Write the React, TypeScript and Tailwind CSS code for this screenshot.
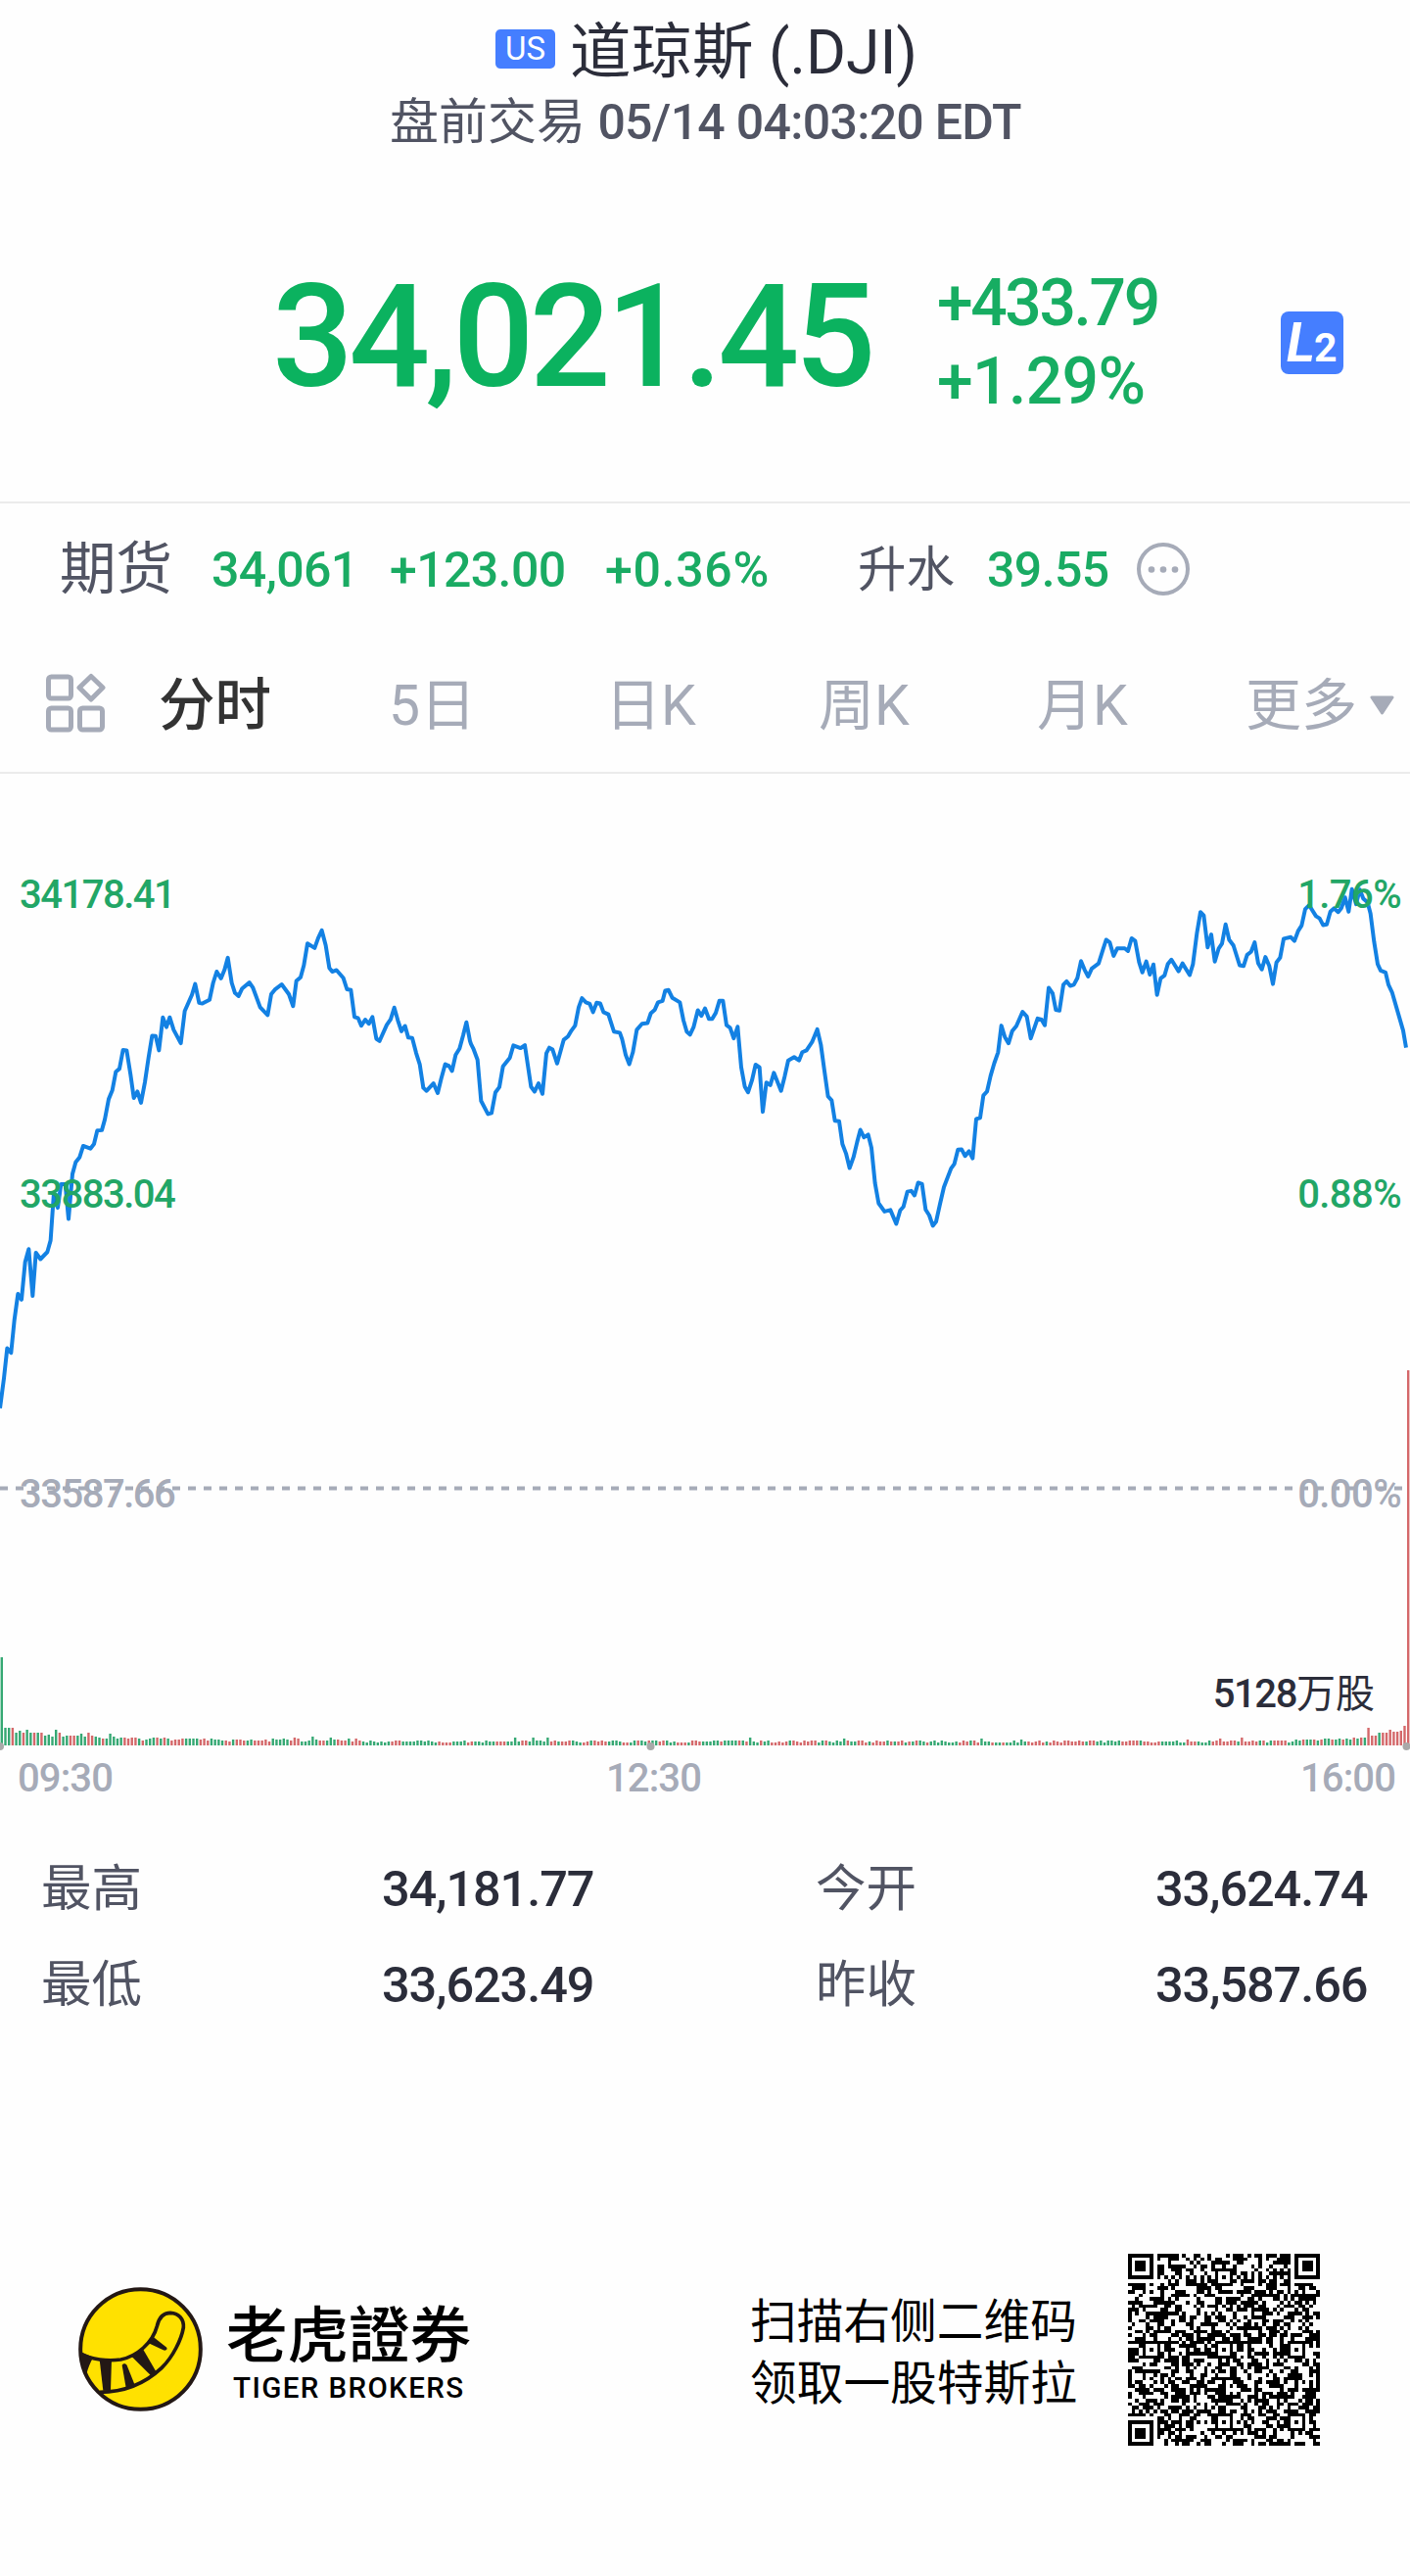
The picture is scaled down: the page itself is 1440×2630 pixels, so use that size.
import { clsx } from 'clsx';

const PRICE_SEGMENTS = [
  '0,1510 12,1430 22,1350 34,1362 44,1275 55,1205 66,1220 77,1120 88,1085 100,1210 110,1095 124,1112 145,1093 155,1062 165,935 177,975 187,912 200,912 210,1005 222,885 232,853 244,840 255,810 277,817 288,805 298,769 312,768 321,740 333,685 344,662 355,612 366,604 377,554 388,555 400,620 410,682 421,665 432,695 444,640 455,575 466,516 477,517 487,555 499,467 510,493 520,467 532,500 554,536 566,450 588,407 598,378 610,428 620,430 642,420 653,375 664,345 677,363 688,340 698,308 710,375 720,402 731,410 742,390 764,374 775,388 797,440 820,461 831,405 842,393 863,379 885,405 898,437 908,370 921,360 931,328 942,270 964,282 975,255 986,235 998,275 1009,335 1018,345 1031,341 1052,362 1063,392 1075,394 1086,466 1097,469 1107,489 1119,473 1130,484 1141,466 1153,524 1163,530 1185,487 1197,472 1208,441 1219,475 1230,504 1241,490 1251,521 1263,522 1275,562 1286,592 1297,655 1307,663 1328,643 1341,669 1352,630 1364,592 1375,596 1385,610 1396,567 1408,550 1419,515 1429,480',
  '0,530 3,538 11,552 23,580 34,690 55,725 66,722 78,667 90,653 101,598 122,575 133,542 155,549 168,541 187,652 198,665 210,643 222,671 234,563 243,548 253,553 267,590 287,527 300,518 311,502 322,489 333,440 343,416 355,427 367,431 377,453 388,428 399,430 409,453 424,459 441,505 459,508 466,525 477,567 488,592 499,560 511,500 527,484 544,482 554,456 566,447 576,427 590,423 598,396 608,394 620,415 643,427 654,475 664,505 674,513 685,493 698,448 709,463 720,443 732,471 742,471 753,455 764,423 775,423 786,488 797,495 808,523 820,492 831,600 842,652 852,667 864,635 875,593 887,600 897,719 908,641 920,648 931,615 953,663 964,625 975,582 993,573 1008,582 1018,560 1031,555 1048,533 1064,499 1075,540 1086,610 1097,678 1108,688 1118,743 1131,744 1141,805 1152,830 1163,869 1175,840 1186,800 1196,767 1207,787 1220,780 1230,815 1241,910 1252,963 1270,985 1288,981 1306,1018 1318,982 1328,972 1340,932 1352,930 1362,942 1373,908 1385,912 1396,980 1407,995 1418,1023 1428,1012',
  '0,965 12,920 34,870 44,858 55,820 66,819 77,837 89,824 100,843 111,738 123,735 133,675 144,665 155,623 166,590 178,560 188,489 199,520 210,536 221,504 234,490 253,452 266,465 278,523 299,470 311,473 321,488 333,388 345,403 355,447 366,449 378,380 388,371 399,383 410,380 421,362 432,317 443,340 454,358 465,337 486,323 498,290 509,260 520,267 532,303 543,283 566,283 576,290 587,256 598,263 610,320 620,347 632,318 643,353 654,326 665,407 676,363 688,355 698,325 709,313 731,344 743,323 765,354 775,325 787,243 798,186 808,195 820,280 831,246 842,318 854,283 864,270 875,219 886,260 899,275 918,328 930,330 941,300 953,292 964,267 975,323 986,339 997,306 1009,330 1020,378 1031,320 1042,308 1053,257 1075,253 1086,263 1097,237 1108,222 1119,178 1131,168 1152,197 1163,203 1174,221 1185,219 1196,185 1207,176 1220,186 1230,175 1241,147 1252,185 1262,125 1275,165 1286,126 1297,150 1310,160 1319,190 1330,265 1341,325 1350,342 1365,347 1374,380 1385,400 1419,502 1428,548',
];

const SEGMENT_WIDTH = 1440;

const pricePoints = PRICE_SEGMENTS.flatMap((segment, index) =>
  segment.split(' ').map((point) => {
    const [x, y] = point.split(',').map(Number);
    return `${x + index * SEGMENT_WIDTH},${y}`;
  })
).join(' ');

// Bar heights in px, one per minute; the matching string holds g (up) or r (down)
const OPENING_VOLUMES = [
  90, 18, 18, 18, 13, 15, 13, 16, 13, 13, 13, 13, 10, 11, 9, 16, 13, 9, 10, 10, 10, 10, 12, 9, 13, 10,
  9, 8, 7, 7, 12, 9, 7, 8, 8, 7, 8, 8, 7, 5, 6, 7, 8, 8, 7, 8, 7, 5, 6, 6, 7, 7, 7, 7, 7, 6, 7, 5, 7, 6,
  6, 5, 5, 4, 6, 6, 6, 5, 5, 6, 5, 5, 5, 6, 4, 7, 6, 6, 7, 6, 5, 8, 7, 4, 4, 5, 9, 6, 5, 5, 5, 8, 6, 6,
  5, 5, 7, 4, 7, 5,
];
const OPENING_SIDES =
  'gggrggrggrgrggggrggrrgggrrggrgggggrrrrgrgggrgrgrrrrggggrrrggggrrgrrrggrrrrrgggggrrrgggggrrgggrrrgrrr';
const CLOSING_VOLUMES = [
  6, 5, 6, 6, 6, 6, 5, 6, 7, 7, 6, 6, 7, 6, 7, 6, 8, 7, 8, 8, 18, 10, 10, 13, 13, 13, 16, 14, 14, 15, 20,
];
const CLOSING_SIDES = 'ggrggrgrggrggrggrgrgrrrgrrrrrrr';

const MINUTES = 390;

function random(seed: number) {
  let state = seed;
  return () => {
    state = (state * 1664525 + 1013904223) % 4294967296;
    return state / 4294967296;
  };
}

function buildVolumes() {
  const next = random(14);
  const bars: { height: number; up: boolean }[] = [];
  const closingStart = MINUTES - CLOSING_VOLUMES.length - 1;
  let up = true;
  for (let i = 0; i < MINUTES; i++) {
    if (i < OPENING_VOLUMES.length) {
      bars.push({ height: OPENING_VOLUMES[i], up: OPENING_SIDES[i] === 'g' });
    } else if (i === MINUTES - 1) {
      bars.push({ height: 383, up: false });
    } else if (i >= closingStart) {
      const k = i - closingStart;
      bars.push({ height: CLOSING_VOLUMES[k], up: CLOSING_SIDES[k] === 'g' });
    } else {
      if (next() > 0.62) up = !up;
      const spike = next() > 0.94 ? 3 : 0;
      bars.push({ height: 3 + Math.round(next() * 2.4) + spike, up });
    }
  }
  return bars;
}

const volumes = buildVolumes();

const QR_SIZE = 53;

function buildQr() {
  const next = random(2021);
  const grid = Array.from({ length: QR_SIZE }, () =>
    Array.from({ length: QR_SIZE }, () => next() > 0.47)
  );
  const square = (top: number, left: number, size: number, quiet: number) => {
    const mid = (size - 1) / 2;
    for (let r = -quiet; r < size + quiet; r++) {
      for (let c = -quiet; c < size + quiet; c++) {
        const row = grid[top + r];
        if (!row || left + c < 0 || left + c >= QR_SIZE) continue;
        const ring = Math.max(Math.abs(r - mid), Math.abs(c - mid));
        row[left + c] = ring !== mid - 1 && ring <= mid;
      }
    }
  };
  for (let i = 8; i < QR_SIZE - 8; i++) {
    grid[6][i] = i % 2 === 0;
    grid[i][6] = i % 2 === 0;
  }
  [
    [4, 24],
    [24, 4],
    [24, 24],
    [24, 44],
    [44, 24],
    [44, 44],
  ].forEach(([r, c]) => square(r, c, 5, 0));
  square(0, 0, 7, 1);
  square(0, QR_SIZE - 7, 7, 1);
  square(QR_SIZE - 7, 0, 7, 1);
  return grid
    .flatMap((row, r) => row.map((on, c) => (on ? `M${c} ${r}h1v1h-1z` : '')))
    .join('');
}

const qrPath = buildQr();

function Header() {
  return (
    <header className="pt-[24px]">
      <div className="flex h-[60px] items-center pl-[506px] leading-[60px]">
        <span className="-mt-[8px] flex h-[40px] w-[61px] items-center justify-center rounded-[5px] bg-[#457eff] text-[33px] leading-[40px] text-white">
          US
        </span>
        <h1 className="ml-[15px] whitespace-nowrap text-[62.5px] text-[#2b2d3a]">
          道琼斯 (.DJI)
        </h1>
      </div>
      <p className="mt-[11px] h-[60px] whitespace-nowrap pl-[398px] text-[50px] leading-[60px] text-[#515463]">
        盘前交易 <span className="font-medium tracking-[-0.7px]">05/14 04:03:20 EDT</span>
      </p>
    </header>
  );
}

function Quote() {
  return (
    <section className="flex h-[357px] items-start pl-[278px] font-medium text-[#0bb25f]">
      <div className="mt-[130px] w-[679px] text-[146px] leading-[120px] tracking-[-4.700px]">
        34,021.45
      </div>
      <div className="mt-[115px] w-[351px] text-[66px] leading-[80px] text-[#17ad62]">
        <div className="tracking-[-2.4px]">+433.79</div>
        <div className="tracking-[-0.6px]">+1.29%</div>
      </div>
      <div className="mt-[163px] flex h-[64px] w-[64px] items-baseline rounded-[8px] bg-[#457eff] pl-[6px] font-bold leading-[64px] text-white">
        <span className="text-[55px] italic">L</span>
        <span className="-ml-[1px] text-[41px]">2</span>
      </div>
    </section>
  );
}

function Futures() {
  return (
    <section className="flex h-[136px] items-center whitespace-nowrap border-t-2 border-[#ebebeb] pl-[61px] pt-[2px] text-[50px] leading-[60px] text-[#515463]">
      <span className="w-[155px] text-[57.5px]">期货</span>
      <span className="w-[182px] font-medium tracking-[-0.6px] text-[#1aab63]">34,061</span>
      <span className="w-[220px] font-medium tracking-[-0.6px] text-[#1aab63]">+123.00</span>
      <span className="w-[258px] font-medium tracking-[0.7px] text-[#1aab63]">+0.36%</span>
      <span className="w-[132px] text-[49.5px]">升水</span>
      <span className="w-[152px] font-medium tracking-[-0.6px] text-[#1aab63]">39.55</span>
      <svg className="-mt-[3px] size-[56px]" viewBox="0 0 56 56">
        <circle cx="28" cy="28" r="25" fill="none" stroke="#a6abb8" strokeWidth="4" />
        <circle cx="16" cy="28.5" r="3.3" fill="#a6abb8" />
        <circle cx="28" cy="28.5" r="3.3" fill="#a6abb8" />
        <circle cx="40" cy="28.5" r="3.3" fill="#a6abb8" />
      </svg>
    </section>
  );
}

const TABS = [
  { label: '分时', width: 'w-[235px]', active: true },
  { label: '5日', width: 'w-[221px]' },
  { label: '日K', width: 'w-[218px]' },
  { label: '周K', width: 'w-[223px]' },
  { label: '月K', width: 'w-[213px]' },
  { label: '更多', width: 'w-[127px]' },
];

function Tabs() {
  return (
    <nav className="flex h-[142px] items-center whitespace-nowrap border-b-2 border-[#ebebeb] pl-[46px] leading-[70px]">
      <svg
        className="mr-[54px] size-[62px]"
        viewBox="0 0 62 62"
        fill="none"
        stroke="#a6abb8"
        strokeWidth="5"
      >
        <rect x="3.5" y="4" width="23" height="22" rx="3" />
        <rect x="3.5" y="36" width="23" height="22" rx="3" />
        <rect x="35.5" y="36" width="23" height="22" rx="3" />
        <path d="M47 3.5L59 15L47 27L35 15Z" strokeLinejoin="round" />
      </svg>
      {TABS.map((tab) => (
        <span
          key={tab.label}
          className={clsx(
            'mt-[5px]',
            tab.width,
            tab.active ? 'text-[57.500px] font-medium text-[#333333]' : 'text-[57px] text-[#a6abb8]'
          )}
        >
          {tab.label}
        </span>
      ))}
      <svg className="mt-[3px] h-[20px] w-[25px]" viewBox="0 0 25 20">
        <path
          d="M2 2H23L12.5 18Z"
          fill="#a6abb8"
          stroke="#a6abb8"
          strokeWidth="3"
          strokeLinejoin="round"
        />
      </svg>
    </nav>
  );
}

const LEVELS = [
  { price: '34178.41', change: '1.76%', className: 'top-[104px] text-[#22a666]' },
  { price: '33883.04', change: '0.88%', className: 'top-[410px] text-[#22a666]' },
  { price: '33587.66', change: '0.00%', className: 'top-[716px] text-[#a6abb8]' },
];

function Chart() {
  return (
    <section className="relative h-[1000px] text-[40px] leading-[40px]">
      <svg className="block h-[1000px] w-[1440px]" viewBox="0 0 1440 1000">
        <svg
          y="70"
          width="1440"
          height="600"
          viewBox="0 0 4320 1568"
          preserveAspectRatio="none"
        >
          <polyline
            points={pricePoints}
            fill="none"
            stroke="#1381e3"
            strokeWidth="4"
            strokeLinejoin="round"
            vectorEffect="non-scaling-stroke"
          />
        </svg>
        <path d="M0 729.5H1432" stroke="#a6abb8" strokeWidth="4" strokeDasharray="8 8" />
        {volumes.map((bar, i) => (
          <rect
            key={i}
            x={i * 3.6925 + 0.6}
            y={992 - bar.height}
            width="2.4"
            height={bar.height}
            fill={bar.up ? '#35a873' : '#d4686a'}
          />
        ))}
        <circle cx="0" cy="993" r="4" fill="#a9a9a9" />
        <circle cx="664.5" cy="993" r="4" fill="#a9a9a9" />
        <circle cx="1436.5" cy="993" r="4" fill="#a9a9a9" />
      </svg>
      {LEVELS.map((level) => (
        <div
          key={level.price}
          className={clsx(
            'absolute left-0 flex w-full justify-between pl-[20px] pr-[9px] font-medium',
            level.className
          )}
        >
          <span className="tracking-[-1.5px]">{level.price}</span>
          <span className="tracking-[-0.6px]">{level.change}</span>
        </div>
      ))}
      <div className="absolute right-[36px] top-[920px] whitespace-nowrap text-[#2b2d3a]">
        <span className="font-medium tracking-[-1.4px]">5128</span>万股
      </div>
    </section>
  );
}

function TimeAxis() {
  return (
    <div className="flex h-[52px] items-center pl-[18px] text-[40px] font-medium leading-[40px] tracking-[-0.9px] text-[#a6abb8]">
      <span className="w-[601px]">09:30</span>
      <span className="w-[709px]">12:30</span>
      <span>16:00</span>
    </div>
  );
}

const STATS = [
  ['最高', '34,181.77', '今开', '33,624.74'],
  ['最低', '33,623.49', '昨收', '33,587.66'],
];

function Stats() {
  return (
    <section className="pt-[38px] text-[51.5px] leading-[98px] text-[#515463]">
      {STATS.map(([leftLabel, leftValue, rightLabel, rightValue]) => (
        <div key={leftLabel} className="flex h-[98px] whitespace-nowrap pl-[42px]">
          <span className="w-[348px]">{leftLabel}</span>
          <span className="w-[443px] text-[50.5px] font-medium tracking-[-1.1px] text-[#2b2d3a]">
            {leftValue}
          </span>
          <span className="w-[347px]">{rightLabel}</span>
          <span className="text-[50.5px] font-medium tracking-[-1.1px] text-[#2b2d3a]">
            {rightValue}
          </span>
        </div>
      ))}
    </section>
  );
}

function TigerLogo() {
  return (
    <svg className="size-[127px]" viewBox="0 0 381 381">
      <circle cx="190.5" cy="190.5" r="184" fill="#ffe100" stroke="#231815" strokeWidth="12" />
      <path
        d="M6 204C40 222 90 228 130 222C180 212 228 170 241 120C247 92 262 79 282 79C308 80 324 98 322 124C316 160 290 214 255 248C210 290 150 322 66 322"
        fill="none"
        stroke="#231815"
        strokeWidth="11"
      />
      <g fill="#231815">
        <path d="M5 197L46 215C36 230 30 248 25 266L12 240Z" />
        <path d="M65 222H102L99 317H76Z" />
        <path d="M134 240C136 233 146 233 149 240L173 300L146 308Z" />
        <path d="M163 212L198 190L238 259L222 271Z" />
        <path d="M212 170L230 153L269 184C276 190 268 197 260 193Z" />
      </g>
    </svg>
  );
}

function Footer() {
  return (
    <footer className="mt-[225px] flex items-start whitespace-nowrap pl-[80px] text-black">
      <div className="mt-[34px]">
        <TigerLogo />
      </div>
      <div className="ml-[24px] mt-[50px] w-[535px] font-medium">
        <div className="text-[62.5px] leading-[70px]">老虎證券</div>
        <div className="mt-[2px] pl-[7px] text-[29.5px] leading-[30px] tracking-[1.4px]">
          TIGER BROKERS
        </div>
      </div>
      <div className="mt-[39px] w-[388px] text-[47.7px] leading-[63px]">
        <div>扫描右侧二维码</div>
        <div>领取一股特斯拉</div>
      </div>
      <svg
        className="-ml-[2px] size-[196px]"
        viewBox={`0 0 ${QR_SIZE} ${QR_SIZE}`}
        shapeRendering="crispEdges"
      >
        <path d={qrPath} fill="#000" />
      </svg>
    </footer>
  );
}

export default function App() {
  return (
    <main className="h-[2630px] w-[1440px] overflow-hidden bg-[#fefefe] font-['Roboto','Noto_Sans_CJK_SC',sans-serif]">
      <Header />
      <Quote />
      <Futures />
      <Tabs />
      <Chart />
      <TimeAxis />
      <Stats />
      <Footer />
    </main>
  );
}
